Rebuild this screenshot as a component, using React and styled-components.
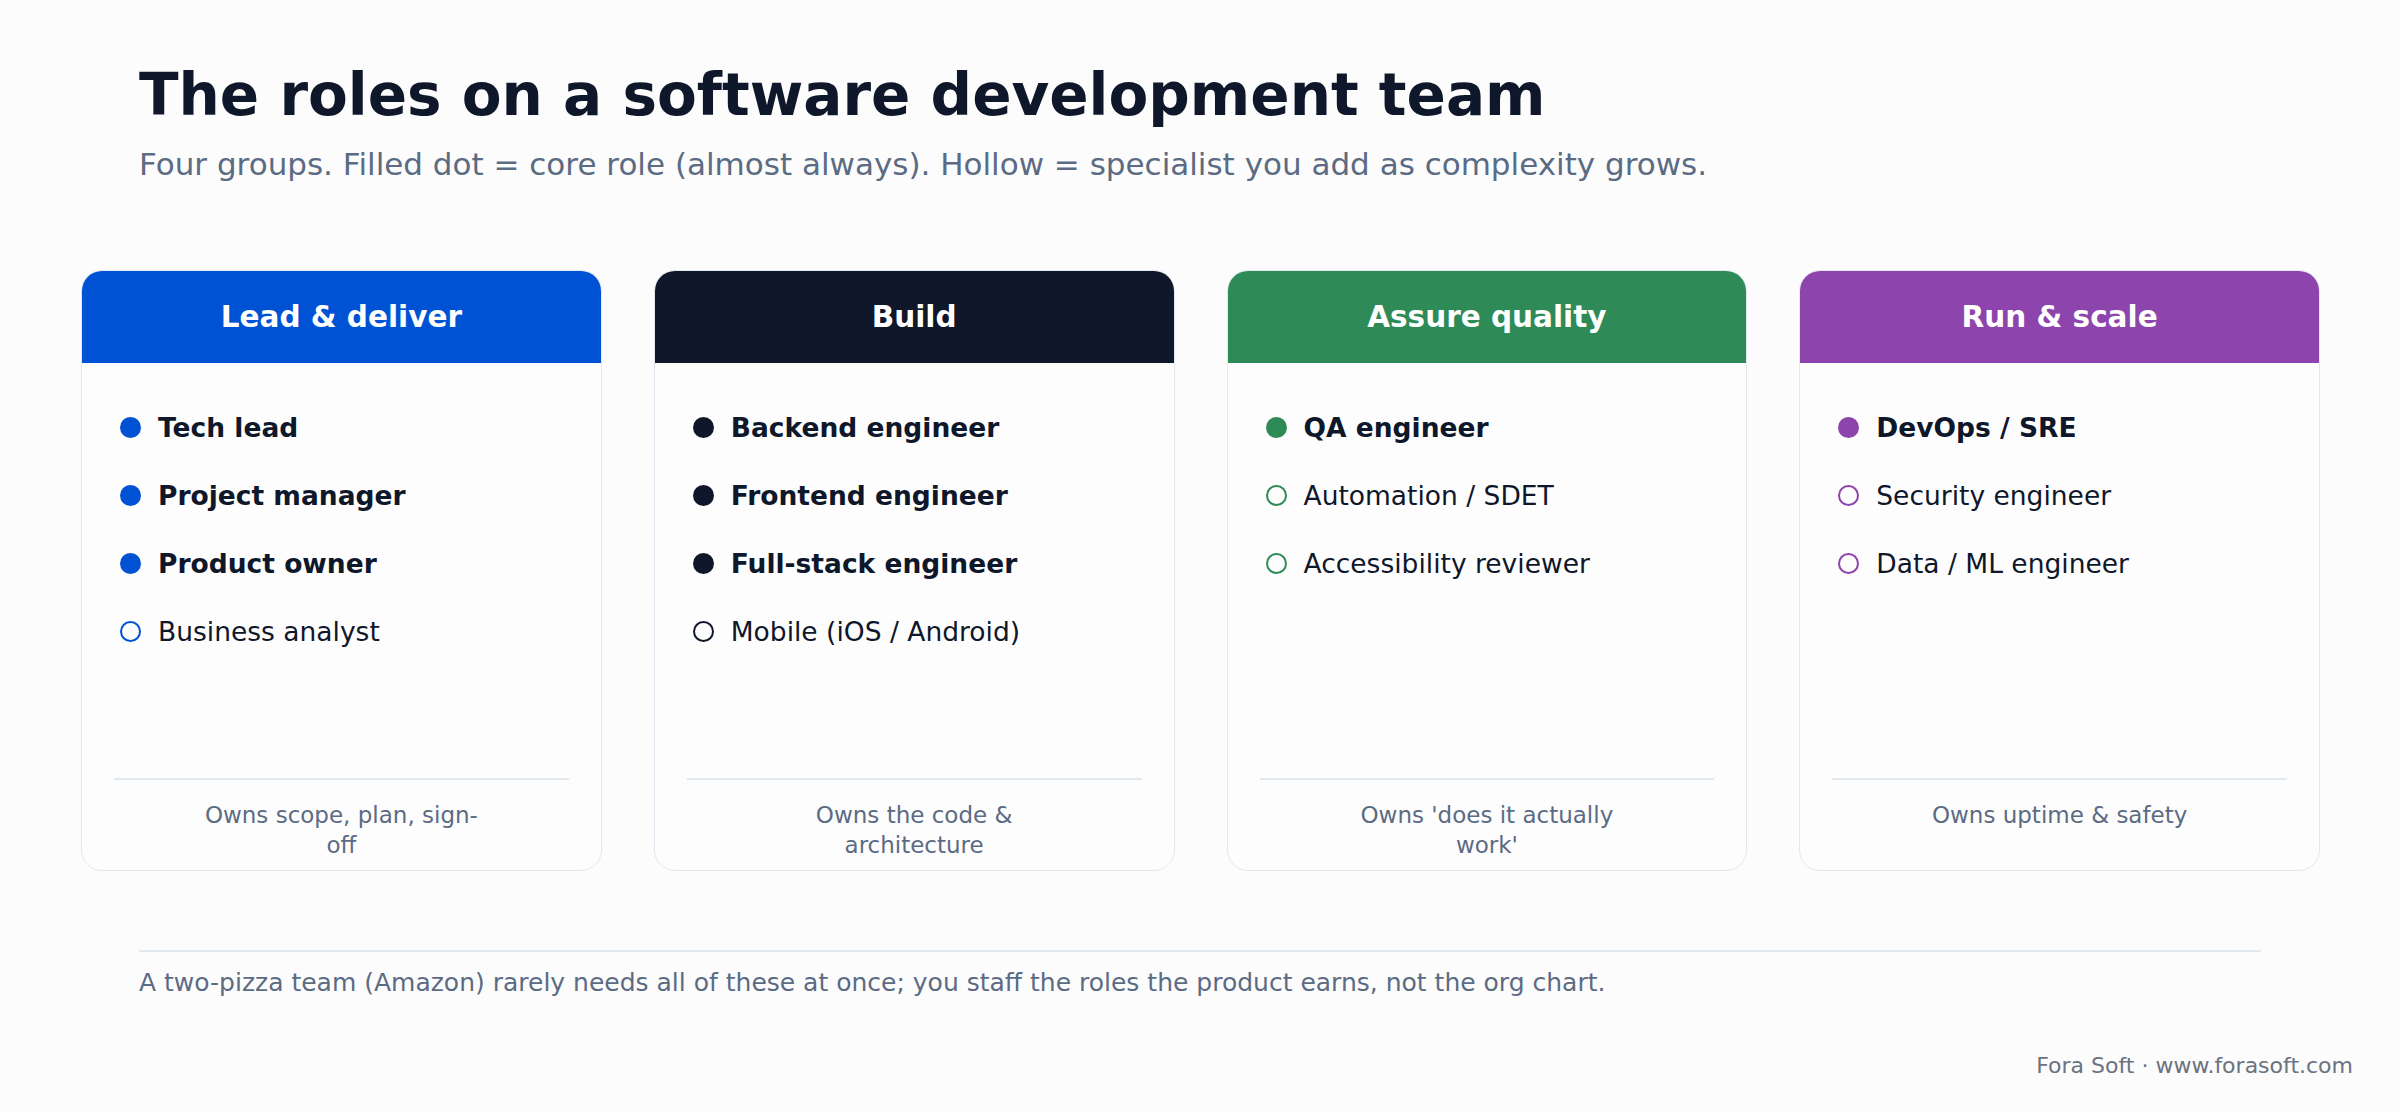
import React from 'react';
import styled, { createGlobalStyle } from 'styled-components';

const Global = createGlobalStyle`
  html, body { margin: 0; background: #fcfcfc; }
  body { font-family: "DejaVu Sans", "Liberation Sans", sans-serif; color: #0f172a; }
`;

const Page = styled.div`
  width: 2400px;
  height: 1112px;
  box-sizing: border-box;
  padding-top: 60px;
  display: flex;
  flex-direction: column;
`;

const Header = styled.div`
  padding: 0 139px;
`;

const Title = styled.h1`
  margin: 0;
  font-size: 58px;
  line-height: 70px;
  font-weight: 700;
  color: #0f172a;
`;

const Subtitle = styled.p`
  margin: 14px 0 0;
  font-size: 31px;
  line-height: 40px;
  color: #5b6b84;
`;

const Grid = styled.div`
  margin: 86px 0 0 81px;
  width: 2239px;
  display: grid;
  grid-template-columns: repeat(4, 1fr);
  gap: 52px;
`;

const Card = styled.div`
  height: 601px;
  border: 1.5px solid #e2e8f0;
  border-radius: 21px;
  overflow: hidden;
  background: #fdfdfd;
  display: flex;
  flex-direction: column;
  box-sizing: border-box;
`;

const CardHead = styled.div`
  height: 92px;
  flex-shrink: 0;
  background: ${p => p.$color};
  color: #fff;
  font-size: 29.5px;
  font-weight: 700;
  display: flex;
  align-items: center;
  justify-content: center;
`;

const List = styled.ul`
  list-style: none;
  margin: 0;
  padding: 30px 0 0 38px;
  flex: 1;
`;

const Item = styled.li`
  height: 68px;
  display: flex;
  align-items: center;
  gap: 17px;
  font-size: 26.5px;
  font-weight: ${p => (p.$core ? 700 : 400)};
`;

const Dot = styled.span`
  width: 21px;
  height: 21px;
  box-sizing: border-box;
  border-radius: 50%;
  flex-shrink: 0;
  border: 2.5px solid ${p => p.$color};
  background: ${p => (p.$core ? p.$color : 'transparent')};
`;

const CardFoot = styled.div`
  margin: 0 32px;
  border-top: 2px solid #e2e8f0;
  height: 92px;
  padding-top: 20px;
  box-sizing: border-box;
  text-align: center;
  font-size: 23px;
  line-height: 30px;
  color: #5b6b84;
`;

const FootWrap = styled.div`
  width: 300px;
  margin: 0 auto;
`;

const Note = styled.div`
  margin: 79px 139px 0;
  border-top: 2px solid #e2e8f0;
  padding-top: 16px;
  font-size: 25px;
  color: #5b6b84;
`;

const Credit = styled.div`
  margin-top: auto;
  padding: 0 47px 34px 0;
  text-align: right;
  font-size: 22px;
  color: #6b7280;
`;

const groups = [
  { name: 'Lead & deliver', color: '#0052d4', foot: 'Owns scope, plan, sign-off',
    roles: [['Tech lead', 1], ['Project manager', 1], ['Product owner', 1], ['Business analyst', 0]] },
  { name: 'Build', color: '#0f172a', foot: 'Owns the code & architecture',
    roles: [['Backend engineer', 1], ['Frontend engineer', 1], ['Full-stack engineer', 1], ['Mobile (iOS / Android)', 0]] },
  { name: 'Assure quality', color: '#2e8b57', foot: "Owns 'does it actually work'",
    roles: [['QA engineer', 1], ['Automation / SDET', 0], ['Accessibility reviewer', 0]] },
  { name: 'Run & scale', color: '#8e44ad', foot: 'Owns uptime & safety',
    roles: [['DevOps / SRE', 1], ['Security engineer', 0], ['Data / ML engineer', 0]] },
];

export default function App() {
  return (
    <Page>
      <Global />
      <Header>
        <Title>The roles on a software development team</Title>
        <Subtitle>
          Four groups. Filled dot = core role (almost always). Hollow = specialist you add as complexity grows.
        </Subtitle>
      </Header>
      <Grid>
        {groups.map(g => (
          <Card key={g.name}>
            <CardHead $color={g.color}>{g.name}</CardHead>
            <List>
              {g.roles.map(([r, core]) => (
                <Item key={r} $core={core}>
                  <Dot $color={g.color} $core={core} />
                  {r}
                </Item>
              ))}
            </List>
            <CardFoot><FootWrap>{g.foot}</FootWrap></CardFoot>
          </Card>
        ))}
      </Grid>
      <Note>
        A two-pizza team (Amazon) rarely needs all of these at once; you staff the roles the product earns, not the org chart.
      </Note>
      <Credit>Fora Soft · www.forasoft.com</Credit>
    </Page>
  );
}
